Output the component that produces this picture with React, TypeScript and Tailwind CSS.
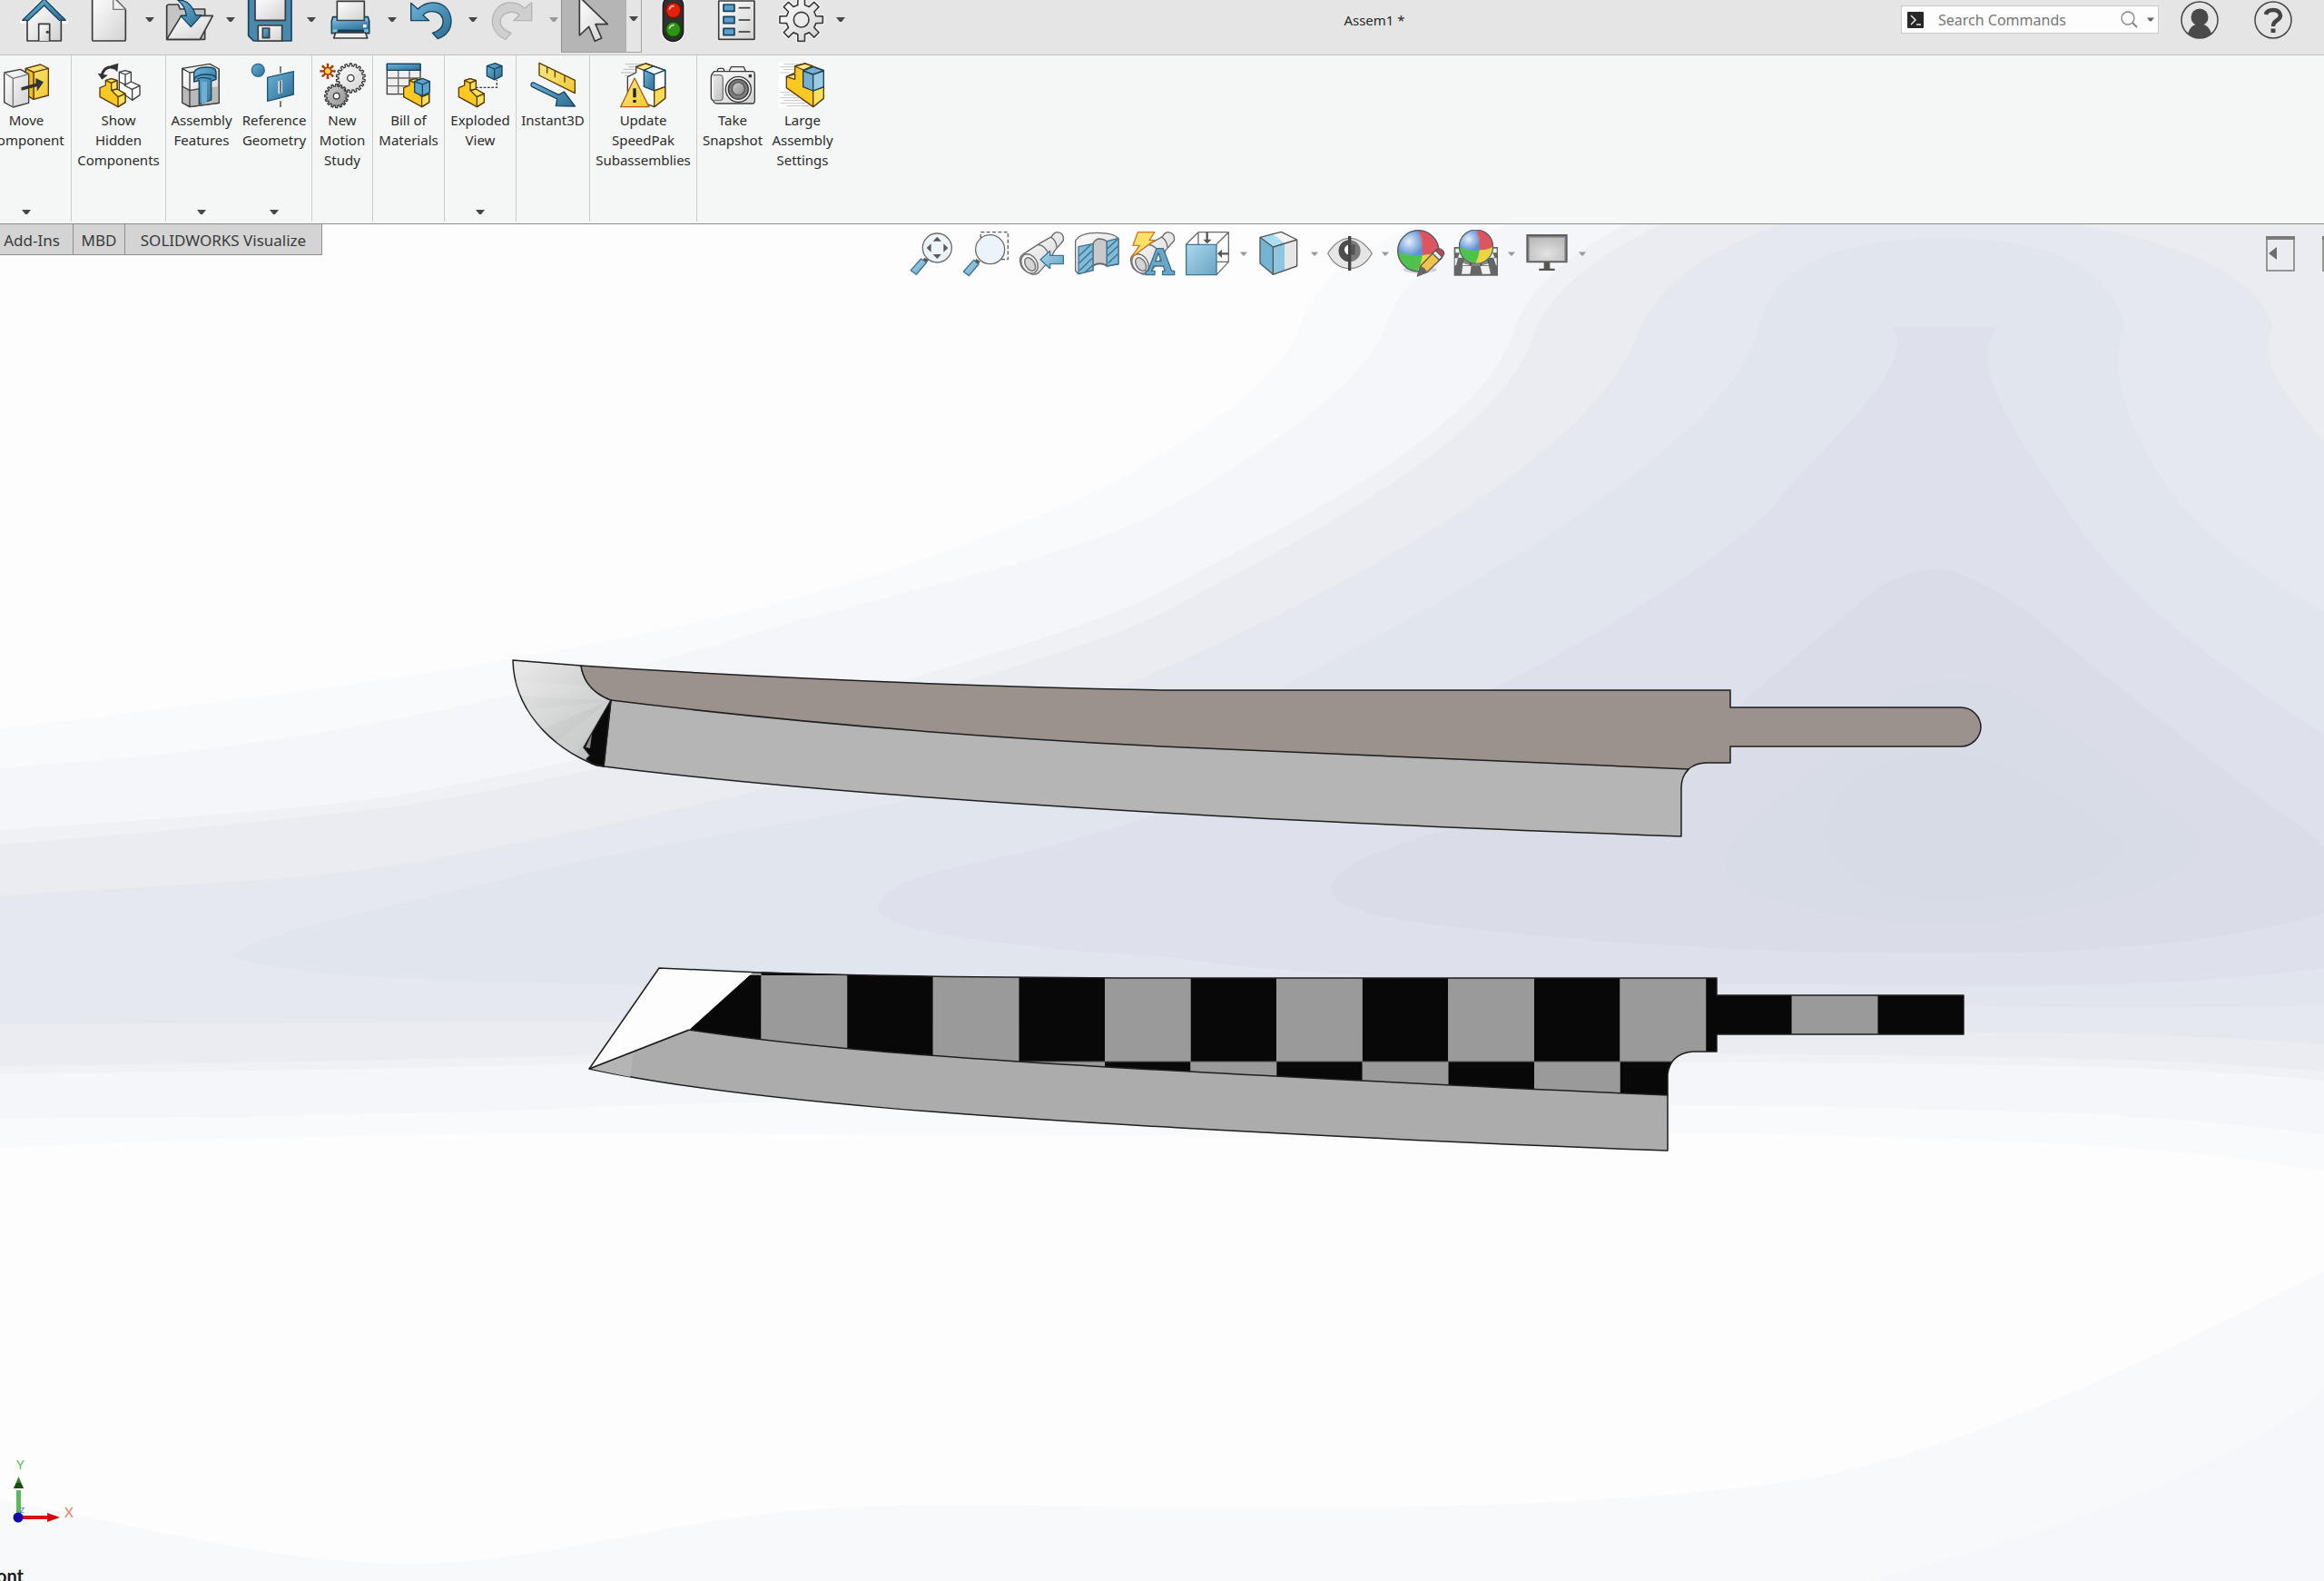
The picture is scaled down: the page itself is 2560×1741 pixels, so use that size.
import type { ReactNode } from "react";

const BLUE = "url(#blue)";
const SKY = "url(#sky)";
const GOLD = "url(#gold)";
const STEEL = "url(#steel)";
const INK = "#3b3b3b";
const NAVY = "#16425b";
const BROWN = "#5a3b0a";

function gearPath(cx: number, cy: number, outer: number, inner: number, teeth: number) {
  const step = (Math.PI * 2) / teeth;
  const pts: string[] = [];
  for (let i = 0; i < teeth; i++) {
    const a = i * step - Math.PI / 2;
    const corners: [number, number][] = [
      [inner, -0.3],
      [outer, -0.2],
      [outer, 0.2],
      [inner, 0.3],
    ];
    corners.forEach(([r, k]) => {
      const t = a + k * step;
      pts.push(`${(cx + r * Math.cos(t)).toFixed(1)} ${(cy + r * Math.sin(t)).toFixed(1)}`);
    });
  }
  return `M${pts.join("L")}Z`;
}

/* Shared gradients, referenced by every icon */
function Gradients() {
  return (
    <svg className="absolute h-0 w-0" aria-hidden="true">
      <defs>
        <linearGradient id="blue" x1="0" y1="0" x2="1" y2="1">
          <stop offset="0" stopColor="#6db3d9" />
          <stop offset="1" stopColor="#2c6c92" />
        </linearGradient>
        <linearGradient id="sky" x1="0" y1="0" x2="1" y2="1">
          <stop offset="0" stopColor="#a9daee" />
          <stop offset="1" stopColor="#6aa3c2" />
        </linearGradient>
        <linearGradient id="gold" x1="0" y1="0" x2="1" y2="1">
          <stop offset="0" stopColor="#fbe98a" />
          <stop offset="1" stopColor="#f0c92c" />
        </linearGradient>
        <linearGradient id="steel" x1="0" y1="0" x2="1" y2="1">
          <stop offset="0" stopColor="#ffffff" />
          <stop offset="1" stopColor="#d2d2d2" />
        </linearGradient>
        <linearGradient id="grey" x1="0" y1="0" x2="1" y2="1">
          <stop offset="0" stopColor="#d0d0d0" />
          <stop offset="1" stopColor="#8c8c8c" />
        </linearGradient>
        <radialGradient id="screen" cx="0.5" cy="0.7" r="0.7">
          <stop offset="0" stopColor="#e2e2e2" />
          <stop offset="1" stopColor="#bdbdbd" />
        </radialGradient>
        <radialGradient id="shine" cx="0.28" cy="0.28" r="0.35">
          <stop offset="0" stopColor="#ffffff" stopOpacity="0.85" />
          <stop offset="1" stopColor="#ffffff" stopOpacity="0" />
        </radialGradient>
      </defs>
    </svg>
  );
}

function Caret({ className = "fill-[#474747]" }: { className?: string }) {
  return (
    <svg width="10" height="5" viewBox="0 0 10 5" className={className} aria-hidden="true">
      <path d="M0 0H10L6 5H4Z" />
    </svg>
  );
}

function TopIcon({ box, children }: { box: string; children: ReactNode }) {
  return (
    <svg width="54" height="48" viewBox={box} fill="none" strokeWidth="5" strokeLinejoin="round" aria-hidden="true">
      {children}
    </svg>
  );
}

type TopItem = { label: string; icon: ReactNode; menu?: boolean; disabled?: boolean; active?: boolean };

const topItems: TopItem[] = [
  {
    label: "Home",
    icon: (
      <TopIcon box="66 0 162 144">
        <path d="M70 68 147-10 228 68V78H70Z" fill="#fff" />
        <path d="M93 66 149 12 205 66V135H93Z" fill={STEEL} stroke={INK} />
        <path d="M131 135V79H167V135" fill={STEEL} stroke={INK} />
        <circle cx="160" cy="106" r="5" fill={INK} />
        <path d="M77 67 149-4 220 67H199L149 18 97 67Z" fill={BLUE} stroke={NAVY} strokeWidth="4" />
      </TopIcon>
    ),
  },
  {
    label: "New",
    menu: true,
    icon: (
      <TopIcon box="282 0 162 144">
        <path d="M308-10H378L418 32V131Q418 135 414 135H312Q308 135 308 131Z" fill={STEEL} stroke={INK} />
        <path d="M377-10V31H418Z" fill="#f1f1f1" stroke="#777" strokeWidth="4" />
      </TopIcon>
    ),
  },
  {
    label: "Open",
    menu: true,
    icon: (
      <TopIcon box="549 0 162 144">
        <path d="M554 130V19Q556 15 562 15H592L598 30H680V130Z" fill="#c4c4c4" stroke={INK} />
        <path d="M554 130 602 52H706L664 130Z" fill={STEEL} stroke={INK} />
        <path d="M590 0Q632-2 650 50H669L634 89 600 52H619Q616 20 590 0Z" fill={BLUE} stroke={NAVY} strokeWidth="4" />
      </TopIcon>
    ),
  },
  {
    label: "Save",
    menu: true,
    icon: (
      <TopIcon box="816 0 162 144">
        <path d="M824-10H966V135H841L824 118Z" fill="#4889ad" stroke={NAVY} />
        <path d="M846-10H946V67H846Z" fill={STEEL} stroke={INK} />
        <path d="M856 135V84H935V135Z" fill={STEEL} stroke={INK} />
        <path d="M871 93H893V125H871Z" fill={BLUE} stroke={INK} />
      </TopIcon>
    ),
  },
  {
    label: "Print",
    menu: true,
    icon: (
      <TopIcon box="1083 0 162 144">
        <path d="M1103 56H1219L1223 70V110H1099V70Z" fill="#7dbfe0" stroke={NAVY} />
        <path d="M1117 4H1207V68H1117Z" fill={STEEL} stroke={INK} />
        <path d="M1101 70H1221V97H1101Z" fill={BLUE} />
        <path d="M1118 97H1206V108H1118Z" fill="#123f5b" />
        <path d="M1203 81H1214V91H1203Z" fill="#fff" />
        <path d="M1112 108H1211L1217 126H1106Z" fill="#efefef" stroke={INK} />
      </TopIcon>
    ),
  },
  {
    label: "Undo",
    menu: true,
    icon: (
      <TopIcon box="-60 0 162 144">
        <path
          d="M-49 10V68H11L-9 50C10 30 58 34 57 74Q56 98 22 109L40 128C72 116 84 92 84 68C80 4 12-8-26 30Z"
          fill={BLUE}
          stroke={NAVY}
          strokeWidth="4"
        />
      </TopIcon>
    ),
  },
  {
    label: "Redo",
    menu: true,
    disabled: true,
    icon: (
      <TopIcon box="207 0 162 144">
        <path
          d="M350 8V68H290L309 50C292 32 246 38 246 74Q248 96 282 109L264 130C232 118 220 92 220 68C224 6 294-8 326 28Z"
          fill="#cfcfcf"
          stroke="#b4b4b4"
          strokeWidth="4"
        />
      </TopIcon>
    ),
  },
  {
    label: "Select",
    menu: true,
    active: true,
    icon: (
      <TopIcon box="474 0 162 144">
        <path d="M505-10V117L536 88 556 136 578 126 558 80H598Z" fill={STEEL} stroke={INK} />
      </TopIcon>
    ),
  },
  {
    label: "Rebuild",
    icon: (
      <TopIcon box="738 0 162 144">
        <rect x="778" y="-20" width="79" height="162" rx="39" fill="#fff" />
        <rect x="784" y="-14" width="67" height="150" rx="33" fill="#303030" stroke="#222" />
        <circle cx="818" cy="34" r="25" fill="#e5200c" stroke="#7d1206" />
        <circle cx="818" cy="97" r="25" fill="#2f9315" stroke="#0f4a08" />
        <path d="M805 32Q808 19 821 20M805 95Q808 82 821 83" stroke="#fff" strokeOpacity="0.7" />
      </TopIcon>
    ),
  },
  {
    label: "File Properties",
    icon: (
      <TopIcon box="950 0 162 144">
        <path d="M966-2H1091V134H966Z" fill="#fff" />
        <path d="M970 3H1088V130H970Z" fill={STEEL} stroke={INK} />
        {[15, 55, 94].map((y) => (
          <g key={y}>
            <rect x="986" y={y} width="36" height="22" fill="#5aa0c8" stroke={NAVY} />
            <path d={`M1036 ${y + 11}H1074`} stroke={INK} />
          </g>
        ))}
      </TopIcon>
    ),
  },
  {
    label: "Options",
    menu: true,
    icon: (
      <TopIcon box="1161 0 162 144">
        <path d={gearPath(1244, 65, 72, 50, 8)} fill={STEEL} stroke="#fff" strokeWidth="12" />
        <path d={gearPath(1244, 65, 72, 50, 8)} fill={STEEL} stroke={INK} />
        <circle cx="1244" cy="65" r="25" fill="#ececec" stroke={INK} />
      </TopIcon>
    ),
  },
];

function TitleBar() {
  return (
    <header className="flex h-[61px] items-start border-b border-[#c3c3c3] bg-[#e5e5e5]">
      <nav aria-label="Quick access" className="flex h-[58px] shrink-0 items-start pl-3">
        {topItems.map((item) => (
          <div
            key={item.label}
            className={`flex h-full ${item.active ? "border-b border-[#a2a2a2]" : ""}`}
          >
            <button
              type="button"
              aria-label={item.label}
              disabled={item.disabled}
              className={`flex h-full items-start justify-center ${
                item.label === "Rebuild" || item.label === "File Properties" || item.label === "Options"
                  ? "w-[70px]"
                  : "w-[72px]"
              } ${item.active ? "border-l border-[#8e8e8e] bg-[#b5b5b5]" : ""}`}
            >
              {item.icon}
            </button>
            {item.menu && (
              <button
                type="button"
                aria-label={`${item.label} menu`}
                disabled={item.disabled}
                className={`flex w-[17px] items-center justify-center ${
                  item.active ? "h-full border-r border-[#a2a2a2] pb-4" : "h-[42px]"
                }`}
              >
                <Caret className={item.disabled ? "fill-[#9a9a9a]" : "fill-[#474747]"} />
              </button>
            )}
          </div>
        ))}
      </nav>

      <h1 className="flex h-[44px] flex-1 items-center justify-center text-[15px] text-[#2a2a2a]">Assem1 *</h1>

      {/* Search */}
      <div className="mt-1.5 flex h-[31px] w-[284px] items-center border border-[#c9c9c9] bg-[#fdfdfd] pr-0.5 pl-1.5">
        <svg width="18" height="18" viewBox="0 0 18 18" aria-hidden="true">
          <rect width="18" height="18" rx="1" fill="#272727" />
          <path d="M4 4 9 9 4 14M10 14H15" fill="none" stroke="#e8e8e8" strokeWidth="1.5" />
        </svg>
        <input
          type="text"
          aria-label="Search Commands"
          placeholder="Search Commands"
          className="ml-4 w-0 flex-1 bg-transparent text-base placeholder:text-[#777777] focus:outline-none"
        />
        <svg width="19" height="19" viewBox="0 0 19 19" fill="none" stroke="#858585" strokeWidth="1.3" aria-hidden="true">
          <circle cx="8" cy="8" r="7" />
          <path d="M13 13 18 18" strokeWidth="2" />
        </svg>
        <button type="button" aria-label="Search options" className="ml-2 p-0.5">
          <Caret className="w-2 fill-[#666666]" />
        </button>
      </div>

      <button type="button" aria-label="Account" className="ml-6 h-[44px]">
        <svg width="42" height="42" viewBox="0 0 42 42" aria-hidden="true">
          <circle cx="21" cy="21" r="20" fill="none" stroke="#444" strokeWidth="1.5" />
          <circle cx="21" cy="18" r="9.5" fill="#4a4a4a" />
          <path d="M8 36Q11 27 17 26H25Q31 27 34 36Q28 41 21 41T8 36Z" fill="#4a4a4a" />
        </svg>
      </button>
      <button type="button" aria-label="Help" className="mr-[35px] ml-[39px] h-[44px]">
        <svg width="42" height="42" viewBox="0 0 42 42" fill="none" stroke="#444" aria-hidden="true">
          <circle cx="21" cy="21" r="20" strokeWidth="1.5" />
          <path d="M13 15Q14 10 21 10T29 16Q29 19 25 21.500T21 28" strokeWidth="4.500" />
          <path d="M21 30.500V35" strokeWidth="5" />
        </svg>
      </button>
    </header>
  );
}

function RibbonIcon({ box, children }: { box: string; children: ReactNode }) {
  return (
    <svg
      width="50"
      height="50"
      viewBox={box}
      fill="none"
      strokeWidth="4"
      strokeLinejoin="round"
      className="shrink-0 overflow-visible"
      aria-hidden="true"
    >
      {children}
    </svg>
  );
}

/* L-shaped yellow part, drawn from its lower left corner */
function Part({ fill = "#fac823", top = "#fbe160", stroke = BROWN }: { fill?: string; top?: string; stroke?: string }) {
  return (
    <g stroke={stroke}>
      <path d="M0 30 19 22V6L38 0 57 6V36L84 50V78L60 93 0 60Z" fill={fill} />
      <path d="M19 6 38 0 57 6 38 14ZM38 38 57 34 84 50 60 60Z" fill={top} />
      <path d="M60 60 84 50V78L60 93ZM38 14 57 6V34L38 38Z" fill={top} />
    </g>
  );
}

type RibbonItem = { lines: string[]; width: string; icon: ReactNode; menu?: boolean };

const ribbonGroups: RibbonItem[][] = [
  [
    {
      lines: ["Move", "Component"],
      width: "w-[98px] -ml-5",
      menu: true,
      icon: (
        <RibbonIcon box="12 207 150 150">
          <path d="M85 226 134 213 160 226V315L111 328 85 312Z" fill={GOLD} stroke={BROWN} />
          <path d="M85 226 111 239 160 226M111 239V328" stroke={BROWN} />
          <path d="M85 226 111 239V328L85 312Z" fill="#f5bd1d" stroke={BROWN} />
          <path d="M14 240 68 229 95 245V340L43 354 14 338Z" fill={STEEL} stroke={INK} />
          <path d="M14 240 43 259 95 245M43 259V354" stroke="#777" />
          <path d="M70 289 118 275V258L144 271 122 302V286L71 299Z" fill="#333" />
        </RibbonIcon>
      ),
    },
  ],
  [
    {
      lines: ["Show", "Hidden", "Components"],
      width: "w-[103px]",
      icon: (
        <RibbonIcon box="316 207 150 150">
          <path d="M392 238 412 233 431 238V270L460 283V314L435 331 392 300Z" fill="#fff" stroke={INK} />
          <path d="M392 238 412 246 431 238M412 246V280L431 270M408 282 435 295 460 283M435 295V331M392 270 412 280" stroke={INK} />
          <path d="M334 248Q345 214 377 225" stroke="#333" strokeWidth="9" />
          <path d="M321 242 354 248 335 263ZM363 217 389 209 386 238Z" fill="#333" />
          <g transform="translate(328 260)">
            <Part />
          </g>
        </RibbonIcon>
      ),
    },
  ],
  [
    {
      lines: ["Assembly", "Features"],
      width: "w-[78px]",
      menu: true,
      icon: (
        <RibbonIcon box="591 207 150 150">
          <path d="M602 226 693 211 724 228V340L627 353 602 339Z" fill={STEEL} stroke={INK} />
          <path d="M602 285 627 299 724 285V340L627 353 602 339Z" fill="#b9b9b9" />
          <path d="M602 226 627 240 660 235M627 240V353M602 285 627 299 660 293M602 226V339L627 353 724 340V228" stroke={INK} />
          <path d="M641 240Q646 223 680 222T714 238V262L698 268V330L658 345V266L641 270Z" fill={BLUE} stroke={NAVY} />
          <path d="M641 262Q650 246 680 246T714 256M652 262Q668 250 698 262" stroke={NAVY} />
          <path d="M666 270H684V338L666 343Z" fill="#6fb0d2" />
        </RibbonIcon>
      ),
    },
    {
      lines: ["Reference", "Geometry"],
      width: "w-[82px]",
      menu: true,
      icon: (
        <RibbonIcon box="831 207 150 150">
          <circle cx="853" cy="232" r="21" fill={BLUE} stroke="#2b678b" />
          <path d="M884 256 970 236V312L884 334Z" fill={BLUE} stroke="#1f5674" />
          <path d="M919 268 933 265V306L919 310Z" fill="#d8e6ee" />
          <path d="M927 219V241M927 267V307M927 334V354" stroke={INK} />
        </RibbonIcon>
      ),
    },
  ],
  [
    {
      lines: ["New", "Motion", "Study"],
      width: "w-[66px]",
      icon: (
        <RibbonIcon box="1056 207 150 150">
          <path d={gearPath(1083, 235, 26, 14, 8)} fill="#a93c08" />
          <circle cx="1083" cy="235" r="9" fill="#fbd84c" />
          <path d={gearPath(1159, 258, 48, 40, 18)} fill={STEEL} stroke={INK} />
          <circle cx="1159" cy="258" r="11" fill="#fff" stroke={INK} />
          <path d={gearPath(1112, 317, 39, 32, 16)} fill="url(#grey)" stroke={INK} />
          <circle cx="1112" cy="317" r="10" fill="#fff" stroke={INK} />
        </RibbonIcon>
      ),
    },
  ],
  [
    {
      lines: ["Bill of", "Materials"],
      width: "w-[78px]",
      icon: (
        <RibbonIcon box="1275 207 150 150">
          <path d="M1279 211H1389V311H1279Z" fill="#efefef" stroke={INK} />
          <path d="M1279 258H1389M1279 284H1389M1316 234V311M1353 234V311" stroke="#666" />
          <path d="M1279 211H1389V232H1279Z" fill={BLUE} stroke={NAVY} />
          <g transform="translate(1334 260)">
            <Part />
          </g>
          <path d="M1370 269 1396 259 1420 269V305L1396 317 1370 305Z" fill="#5fa5cb" stroke={NAVY} />
          <path d="M1370 269 1396 279 1420 269M1396 279V317" stroke={NAVY} />
        </RibbonIcon>
      ),
    },
  ],
  [
    {
      lines: ["Exploded", "View"],
      width: "w-[78px]",
      menu: true,
      icon: (
        <RibbonIcon box="102 207 150 150">
          <path d="M194 218 224 203 254 218V254L224 270 194 254Z" fill="#fff" />
          <path d="M199 218 226 209 249 218V251L224 264 199 251Z" fill={BLUE} stroke={NAVY} />
          <path d="M199 218 224 228 249 218M224 228V264" stroke={NAVY} />
          <g transform="translate(106 260)">
            <Part />
          </g>
          <path d="M162 289H232V264" stroke={INK} strokeDasharray="8 5" />
        </RibbonIcon>
      ),
    },
  ],
  [
    {
      lines: ["Instant3D"],
      width: "w-[80px]",
      icon: (
        <RibbonIcon box="342 207 150 150">
          <path d="M372 208 490 265V308L372 249Z" fill={GOLD} stroke={BROWN} />
          <path d="M398 221V242M424 234V256M456 250V272" stroke={BROWN} />
          <path d="M345 278Q347 271 354 273L436 313 454 303 490 351 427 350 431 327 349 287Q344 284 345 278Z" fill={BLUE} stroke={NAVY} />
        </RibbonIcon>
      ),
    },
  ],
  [
    {
      lines: ["Update", "SpeedPak", "Subassemblies"],
      width: "w-[117px]",
      icon: (
        <RibbonIcon box="640 207 150 150">
          <path d="M655 212H720M665 221H700M648 229H690M640 240H685M652 250H680" stroke="#999" strokeWidth="2" />
          <path d="M662 254 690 240V220L722 210 786 232V325L750 353 662 320Z" fill="#fff" stroke={INK} />
          <path d="M690 222 722 210 748 219 716 232Z" fill="#fbe98a" stroke={BROWN} />
          <path d="M716 232 748 219 786 232 750 246Z" fill="#fff" stroke={NAVY} />
          <path d="M716 232 750 246V300L716 286Z" fill={BLUE} stroke={NAVY} />
          <path d="M750 246 786 232V287L750 300Z" fill="#fff" stroke={NAVY} />
          <path d="M750 300 786 287V325L750 353Z" fill="#f6dd55" stroke={BROWN} />
          <path d="M685 258 733 353H639Z" fill={GOLD} stroke="#b25a13" />
          <path d="M685 292V322M685 330V339" stroke="#222" strokeWidth="10" />
        </RibbonIcon>
      ),
    },
  ],
  [
    {
      lines: ["Take", "Snapshot"],
      width: "w-[78px]",
      icon: (
        <RibbonIcon box="936 207 150 150">
          <path d="M998 238 1006 221H1048L1055 238M961 238V230Q962 226 968 226H978Q984 227 984 238" fill="#f4f4f4" stroke={INK} />
          <path d="M950 236H1078Q1084 238 1084 244V336Q1083 342 1076 342H958Q950 342 947 332Q940 330 940 322V256Q940 244 950 236Z" fill={STEEL} stroke={INK} />
          <path d="M946 248H972Q979 250 979 262V320Q978 332 970 332H950" fill="url(#grey)" fillOpacity="0.4" stroke="#777" />
          <circle cx="1030" cy="295" r="42" fill="#ededed" stroke={INK} />
          <circle cx="1030" cy="295" r="33" fill="#7d7d7d" stroke={INK} />
          <circle cx="1030" cy="293" r="21" fill="url(#grey)" stroke="#555" />
          <path d="M1064 246H1074V256H1064Z" fill={INK} />
        </RibbonIcon>
      ),
    },
    {
      lines: ["Large", "Assembly", "Settings"],
      width: "w-[76px]",
      icon: (
        <RibbonIcon box="1167 207 150 150">
          <path d="M1164 206H1240V356H1164Z" fill="#fff" />
          <path d="M1180 212H1240M1168 221H1225M1180 229H1215M1168 240H1200M1168 305H1200M1180 314H1215M1168 323H1230M1180 332H1240M1168 341H1250M1190 350H1265" stroke="#a8a8a8" strokeWidth="2" />
          <path d="M1189 253 1217 240V219L1250 210 1312 232V325L1277 353 1189 290Z" fill="#fac823" stroke={BROWN} />
          <path d="M1217 219 1250 210 1275 218 1245 231ZM1189 253 1217 245V262Z" fill="#fbe98a" stroke={BROWN} />
          <path d="M1277 300 1312 287V325L1277 353Z" fill="#f9e25c" stroke={BROWN} />
          <path d="M1244 234 1277 221 1312 234V287L1277 300 1244 287Z" fill="#79aecf" stroke={NAVY} />
          <path d="M1244 234 1277 246 1312 234V287L1277 300V246" fill="#9ccbe2" stroke={NAVY} />
        </RibbonIcon>
      ),
    },
  ],
];

function Ribbon() {
  return (
    <section aria-label="Assembly commands" className="flex h-[186px] border-b border-[#8c8c8c] bg-[#f5f7f6] pb-0.5">
      {ribbonGroups.map((group, i) => (
        <div
          key={group[0].lines[0]}
          className={`flex ${i < ribbonGroups.length - 1 ? "border-r border-[#cccccc]" : ""}`}
        >
          {group.map((item) => (
            <button
              key={item.lines.join(" ")}
              type="button"
              className={`flex shrink-0 flex-col items-center pt-2 pb-2 text-[15px] leading-[22px] text-[#2b2b2b] ${item.width}`}
            >
              {item.icon}
              <span className="mt-0.5 flex flex-col whitespace-nowrap">
                {item.lines.map((line) => (
                  <span key={line}>{line}</span>
                ))}
              </span>
              {item.menu && (
                <span className="mt-auto">
                  <Caret />
                </span>
              )}
            </button>
          ))}
        </div>
      ))}
    </section>
  );
}

function ViewIcon({ box, children }: { box: string; children: ReactNode }) {
  return (
    <svg width="54" height="52" viewBox={box} fill="none" strokeWidth="4" strokeLinejoin="round" aria-hidden="true">
      {children}
    </svg>
  );
}

function Spyglass({ x }: { x: number }) {
  return (
    <g transform={`translate(${x} 0)`} stroke="#6a6a6a">
      <path d="M404 142Q398 148 403 168T440 201Q452 203 462 196L496 158 516 122 544 90Q548 64 524 62Q512 64 506 76L468 98 412 134Z" fill={STEEL} />
      <path d="M460 104Q486 104 498 142M504 80Q520 88 522 112" />
      <ellipse cx="432" cy="166" rx="25" ry="34" transform="rotate(-32 432 166)" fill="#f4f4f4" />
      <ellipse cx="434" cy="168" rx="15" ry="24" transform="rotate(-32 434 168)" fill="#d5d5d5" />
    </g>
  );
}

function Ball({ cx, cy, r }: { cx: number; cy: number; r: number }) {
  return (
    <g transform={`translate(${cx} ${cy}) scale(${r / 100})`}>
      <circle r="100" fill="#4ec24a" />
      <path d="M0-100C-60-100-100-50-100 5Q-40 25 20 20Q20-50 0-100Z" fill="#5b90d6" />
      <path d="M0-100C60-100 100-50 100 5Q60 20 20 20Q20-50 0-100Z" fill="#dd5560" />
      <path d="M20 20Q60 20 100 0C100 60 50 100-5 100Q15 60 20 20Z" fill="#ecd447" />
      <circle r="100" fill="url(#shine)" />
      <circle r="98" stroke="#5a5f66" strokeWidth="6" />
    </g>
  );
}

const viewItems: { label: string; icon: ReactNode; menu?: boolean }[] = [
  {
    label: "Zoom to Fit",
    icon: (
      <ViewIcon box="27 54 162 156">
        <path d="M84 146 100 154 92 162 80 156Z" fill="#555" />
        <path d="M74 150 92 162 58 202 40 188Z" fill={SKY} stroke="#3d6f8a" />
        <circle cx="127" cy="114" r="48" fill="#eef5fa" stroke="#6a6a6a" />
        <path d="M127 77 141 92H113ZM127 150 141 135H113ZM92 114 107 100V128ZM163 114 148 100V128Z" fill="#5a5a5a" />
      </ViewIcon>
    ),
  },
  {
    label: "Zoom to Area",
    icon: (
      <ViewIcon box="210 54 162 156">
        <path d="M271 100V62H361V152H330" stroke="#5f5f5f" strokeDasharray="12 7" />
        <path d="M256 150 270 160 262 168 250 160Z" fill="#555" />
        <path d="M248 154 264 168 232 206 214 192Z" fill={SKY} stroke="#3d6f8a" />
        <circle cx="302" cy="119" r="48" fill="#eaf2fa" fillOpacity="0.92" stroke="#6a6a6a" />
      </ViewIcon>
    ),
  },
  {
    label: "Previous View",
    icon: (
      <ViewIcon box="393 54 162 156">
        <Spyglass x={0} />
        <path d="M468 153 500 124V139H544V167H500V182Z" fill={SKY} stroke="#3d7595" />
      </ViewIcon>
    ),
  },
  {
    label: "Section View",
    icon: (
      <ViewIcon box="576 54 162 156">
        <path d="M584 90Q600 64 656 64T726 84V168L688 174Q664 160 642 174V188L594 200 584 190Z" fill={STEEL} stroke="#6a6a6a" />
        <path d="M642 100Q650 84 664 84T688 92V172Q664 158 642 172Z" fill="#c9c9c9" stroke="#6a6a6a" />
        <path d="M594 110 642 100V188L594 200ZM688 92 726 82V166L688 174Z" fill="#80bcd9" stroke="#3d7595" />
        <path d="M596 140 634 104M596 164 640 122M598 188 640 148M616 194 640 172M690 116 722 86M690 140 724 108M692 164 724 134" stroke="#3f6d86" />
      </ViewIcon>
    ),
  },
  {
    label: "Dynamic Annotation Views",
    icon: (
      <ViewIcon box="759 54 162 156">
        <Spyglass x={366} />
        <path d="M790 62H846L828 88H846L768 146 796 106H774Z" fill="#fbe06a" stroke="#c9792c" />
        <path
          d="M852 116H874L902 190H911V203H872V190H880L874 174H842L836 190H846V203H816V190H824ZM848 158H868L858 130Z"
          fill="#6aa6c8"
          fillRule="evenodd"
          stroke="#3d6f8a"
        />
      </ViewIcon>
    ),
  },
  {
    label: "View Orientation",
    menu: true,
    icon: (
      <ViewIcon box="942 54 162 156">
        <path d="M950 102 990 62H1090V160L1050 203M990 62V102M1050 102 1090 62M1050 160H1090" stroke="#6a6a6a" />
        <path d="M950 103H1050V203H950Z" fill={SKY} stroke="#3d7595" />
        <path d="M1019 62V90M1090 133H1064" stroke="#555" strokeWidth="7" />
        <path d="M1006 86H1034L1019 100ZM1068 119V147L1053 133Z" fill="#555" />
      </ViewIcon>
    ),
  },
  {
    label: "Display Style",
    menu: true,
    icon: (
      <ViewIcon box="6 54 162 156">
        <path d="M24 79 94 61 146 87 67 111Z" fill="#f5f5f5" />
        <path d="M24 79 66 68 106 99 67 111Z" fill="#a9def3" />
        <path d="M24 79 67 111V202L24 165Z" fill="#74b4d3" />
        <path d="M67 111 106 99V189L67 202Z" fill="#8cc6e0" />
        <path d="M106 99 146 87V174L106 189Z" fill="#e6e6e6" />
        <path d="M24 79 94 61 146 87V174L67 202 24 165ZM24 79 67 111 146 87M67 111V202" stroke="#555" />
      </ViewIcon>
    ),
  },
  {
    label: "Hide/Show Items",
    menu: true,
    icon: (
      <ViewIcon box="240 54 162 156">
        <path d="M248 132Q280 82 320 82T394 132Q366 182 320 182T248 132Z" fill="#e6e6e6" stroke="#8a8a8a" />
        <circle cx="320" cy="124" r="36" fill="#7a7a7a" />
        <path d="M320 88A36 36 0 0 0 320 160Z" fill="#4d4d4d" />
        <circle cx="320" cy="120" r="17" fill="#fff" />
        <path d="M320 103H338V137H320Z" fill="#555" />
        <path d="M320 75V189" stroke="#444" strokeWidth="10" />
      </ViewIcon>
    ),
  },
  {
    label: "Edit Appearance",
    icon: (
      <ViewIcon box="474 54 162 156">
        <ellipse cx="552" cy="186" rx="56" ry="12" fill="#bdbdc2" fillOpacity="0.6" />
        <Ball cx={547} cy={124} r={69} />
        <path d="M544 207 554 174 600 126 624 148 576 194Z" fill="#f0c44c" stroke="#5a5a5a" />
        <path d="M544 207 554 174Q568 178 576 194Z" fill="#666" />
        <path d="M604 122 610 118Q619 114 627 122T630 138L626 144Z" fill="#c94650" stroke="#5a5a5a" />
        <path d="M594 132 604 122 626 144 616 154Z" fill="#eee" stroke="#5a5a5a" />
      </ViewIcon>
    ),
  },
  {
    label: "Apply Scene",
    menu: true,
    icon: (
      <ViewIcon box="657 54 162 156">
        <path d="M665 111H810V206H665Z" fill="#646765" />
        <path d="M670 116H684V130H670ZM792 116H806V130H792ZM684 130H698L700 146H678ZM780 130H792L800 146H776ZM668 148H678L672 172H668ZM796 148H806V172H804ZM700 150H720L716 172H692ZM752 150H772L780 172H758ZM694 174H722L718 200H690ZM752 174H780L786 200H758ZM724 160H750L752 172H722Z" fill="#f0f0f0" />
        <ellipse cx="738" cy="160" rx="44" ry="12" fill="#444" fillOpacity="0.6" />
        <Ball cx={738} cy={110} r={57} />
      </ViewIcon>
    ),
  },
  {
    label: "View Settings",
    menu: true,
    icon: (
      <ViewIcon box="891 54 162 156">
        <path d="M962 162H982V182H998V189H946V182H962Z" fill="#555" />
        <path d="M904 69H1040V163H904Z" fill="#5f5f5f" />
        <path d="M910 76H1034V158H910Z" fill="#8b8b8b" />
        <path d="M914 80H1030V156H914Z" fill="url(#screen)" />
      </ViewIcon>
    ),
  },
];

const tabs = [
  { label: "Add-Ins", className: "w-[81px] pr-2.5" },
  { label: "MBD", className: "w-[57px]" },
  { label: "SOLIDWORKS Visualize", className: "w-[217px]" },
];

/* Background shading, from the lightest band to the darkest */
const bands = [
  {
    fill: "#f8fafb",
    d: "M0 802C200 778 380 758 565 725S900 660 1061 600S1230 530 1280 500S1410 420 1431 361S1500 275 1560 247H2560V1290Q2400 1262 2200 1257Q1900 1244 1700 1248T1280 1251T735 1248T0 1264Z",
  },
  {
    fill: "#f8f9fb",
    d: "M0 1652C120 1672 300 1722 449 1722S740 1672 898 1662S1160 1660 1280 1660C1500 1662 1760 1660 1960 1633S2400 1480 2560 1400V1741H0Z",
  },
  { fill: "#f5f7fa", d: "M2060 1741Q2440 1640 2560 1530V1741Z" },
  {
    fill: "#f4f6fa",
    d: "M0 846C110 838 220 828 327 811S650 752 816 702S1190 612 1280 562S1500 430 1525 361S1600 280 1660 247H2560V1250Q2400 1228 2200 1223T1845 1217C1600 1210 900 1208 653 1219S200 1230 0 1232Z",
  },
  {
    fill: "#eff1f5",
    d: "M0 914C140 904 280 896 408 880S1120 735 1280 651S1640 470 1668 361Q1690 300 1790 247H2560V1190Q2400 1174 2200 1173C1900 1168 900 1164 653 1171S200 1180 0 1182Z",
  },
  {
    fill: "#ebecf1",
    d: "M0 930C150 918 300 904 420 890S1130 755 1290 670S1660 480 1692 361Q1720 300 1830 247H2560V1180Q2400 1166 2200 1164C1900 1158 900 1156 653 1162S200 1172 0 1174Z",
  },
  {
    fill: "#e5e8ef",
    d: "M0 987C140 975 280 974 408 957S1070 830 1280 737S1760 500 1807 361Q1840 290 1960 247H2284Q2480 280 2504 361Q2480 400 2560 485V1150Q2400 1138 2200 1137C1900 1132 900 1124 653 1125S200 1127 0 1128Z",
  },
  {
    fill: "#e1e5ed",
    d: "M257 1053C262 1034 420 1000 571 964S870 908 1020 877S1300 815 1411 757S1910 500 1937 361Q1960 262 2140 262T2341 361C2310 420 2380 540 2423 578S2500 640 2560 674V1107Q2380 1112 2200 1108C1900 1104 900 1094 686 1084Q310 1080 257 1053Z",
  },
  {
    fill: "#dee0eb",
    d: "M967 1002C970 965 1060 955 1143 935S1500 830 1647 757S1930 590 1958 552S2120 400 2084 360H2202C2160 400 2230 490 2284 572S2450 740 2560 808V1066Q2420 1084 2260 1085T1770 1082T1280 1053Q980 1035 967 1002Z",
  },
  {
    fill: "#dadce7",
    d: "M1466 980C1470 945 1560 925 1607 910S1850 835 1917 776S2030 680 2055 658S2110 627 2133 627S2200 645 2260 696S2360 775 2423 827S2540 910 2560 932V1005Q2420 1050 2137 1050T1607 1021Q1466 1006 1466 980Z",
  },
  { fill: "#d8dce6", d: "M1900 955C1905 900 2010 860 2080 770Q2140 730 2220 765C2280 800 2400 900 2424 925C2440 980 2220 1018 2140 1018S1900 990 1900 955Z" },
  { fill: "#d7dbe5", d: "M2010 920Q2020 850 2110 830T2340 930Q2330 980 2180 990T2010 920Z" },
];

const CHECK = 94.6;
const CHECK_START = 744;
const checks = Array.from({ length: 15 }, (_, i) => i);

function Model() {
  return (
    <svg
      viewBox="0 247 2560 1494"
      preserveAspectRatio="xMidYMid slice"
      className="absolute inset-0 h-full w-full"
      role="img"
      aria-label="Two blade components"
    >
      <defs>
        <clipPath id="checkered">
          <path d="M759 1134 830 1070Q1027 1077 1330 1077H1891V1096H2163V1139H1891V1158H1865Q1840 1160 1837 1183V1215L1122 1180 838 1155Z" />
        </clipPath>
        <linearGradient id="tip" x1="0.1" y1="0.1" x2="0.8" y2="1">
          <stop offset="0" stopColor="#e6e6e6" />
          <stop offset="0.5" stopColor="#cfd0d0" />
          <stop offset="1" stopColor="#bcc0c0" />
        </linearGradient>
      </defs>

      {bands.map((band) => (
        <path key={band.d} d={band.d} fill={band.fill} />
      ))}

      {/* Curved blade */}
      <g stroke="#1e1e1e" strokeWidth="1.5" strokeLinejoin="round">
        <path d="M565 727 640 733Q644 760 673 771L665 844 657 843C605 822 566 780 565 727Z" fill="url(#tip)" />
        <path d="M567 750 645 755 671 772 572 766ZM578 782 671 772 596 803ZM612 818 671 772 634 832Z" fill="#ffffff" fillOpacity="0.12" stroke="none" />
        <path d="M640 733Q940 753 1280 760H1906V779H2160A22 22 0 0 1 2182 801A22 22 0 0 1 2160 822H1906V840H1880Q1868 840 1860 847L1856 852 1280 850 700 790 673 771Q644 760 640 733Z" fill="#9b928e" />
        <path d="M673 771C860 794 1080 812 1280 822S1680 840 1860 847Q1852 855 1852 868V921C1660 914 1480 907 1280 895S860 868 665 844Z" fill="#b5b5b5" />
        <path d="M673 771 665 844 652 841 646 836 650 832 643 823Z" fill="#0a0a0a" />
        <path d="M652 808 650 824 645 823Z" fill="#8a8a8a" stroke="none" />
      </g>

      {/* Straight blade */}
      <g strokeLinejoin="round">
        <g clipPath="url(#checkered)">
          {checks.map((i) => {
            const dark = i % 2 === 0 ? "#080808" : "#9a9a9a";
            const light = i % 2 === 0 ? "#9a9a9a" : "#080808";
            const x = CHECK_START + i * CHECK;
            return (
              <g key={i}>
                <rect x={x} y="1060" width={CHECK} height="14" fill={light} />
                <rect x={x} y="1074" width={CHECK} height="95" fill={dark} />
                <rect x={x} y="1169" width={CHECK} height="60" fill={light} />
              </g>
            );
          })}
          <path d="M830 1169H1900" stroke="#555" />
        </g>
        <path
          d="M649 1177 759 1134C880 1152 1000 1161 1122 1169S1600 1196 1837 1206V1267C1660 1261 1480 1252 1300 1242S820 1214 649 1177Z"
          fill="#acacac"
          stroke="#1e1e1e"
          strokeWidth="1.5"
        />
        <path d="M651 1177 698 1159 694 1186Z" fill="#b5b5b5" />
        <path d="M649 1177 726 1066 830 1070 759 1134Z" fill="#fdfdfd" />
        <g fill="none" stroke="#1e1e1e" strokeWidth="1.5">
          <path d="M649 1177 726 1066 838 1071Q1027 1077 1330 1077H1891V1096H2163V1139H1891V1158H1865Q1840 1160 1837 1183V1206" />
          <path d="M649 1177 759 1134" />
        </g>
      </g>
    </svg>
  );
}

function Triad() {
  return (
    <svg
      width="100"
      height="100"
      viewBox="0 -10 100 100"
      className="absolute bottom-10 left-0 font-['Lato',sans-serif]"
      aria-hidden="true"
    >
      <path d="M18 60V30H23V60Z" fill="#5cb85a" />
      <path d="M20.500 15 26 28H15Z" fill="#2f7f2b" />
      <path d="M15 28 18 22H23L26 28Z" fill="#1d4d0c" />
      <path d="M22 58H53V62H22Z" fill="#d81010" />
      <path d="M52 55 66 60 52 65Z" fill="#d00808" />
      <circle cx="20" cy="60" r="5.500" fill="#0808a8" />
      <text x="18" y="7" fontSize="14" fill="#5cb85a">Y</text>
      <text x="71" y="60" fontSize="15" fill="#e8805f">X</text>
      <text x="22" y="55" fontSize="8" fill="#4060d8">Z</text>
    </svg>
  );
}

function PaneToggle() {
  return (
    <svg width="32" height="39" viewBox="0 0 32 39" className="shrink-0" aria-hidden="true">
      <path d="M1 1H31V38H1Z" fill="none" stroke="#7b7b7b" strokeWidth="1.500" />
      <path d="M0 0H32V4H0Z" fill="#7b7b7b" />
      <path d="M12 12V26L3 19Z" fill="#6e6e6e" />
    </svg>
  );
}

function Viewport() {
  return (
    <main className="relative flex-1 overflow-hidden bg-[#fdfdfd]">
      <Model />
      <div className="relative flex items-start">
        <div role="tablist" className="flex shrink-0">
          {tabs.map((tab) => (
            <button
              key={tab.label}
              type="button"
              role="tab"
              className={`h-[34px] border-r border-b border-[#8f8f8f] bg-[#d4d4d4] pt-0.5 text-[17px] whitespace-nowrap text-[#3a3a3a] ${tab.className}`}
            >
              {tab.label}
            </button>
          ))}
        </div>

        <div role="toolbar" aria-label="View" className="flex flex-1 justify-center pt-1.5 pr-[104px]">
          {viewItems.map((item) => (
            <div key={item.label} className="flex items-center">
              <button type="button" aria-label={item.label} className="flex w-[61px] justify-center">
                {item.icon}
              </button>
              {item.menu && (
                <button type="button" aria-label={`${item.label} menu`} className="flex w-[17px] justify-center">
                  <Caret className="w-2 fill-[#9a9a9a]" />
                </button>
              )}
            </div>
          ))}
        </div>

        <div className="flex w-16 shrink-0 gap-[30px] overflow-hidden pt-[13px]">
          <button type="button" aria-label="Collapse pane" className="shrink-0">
            <PaneToggle />
          </button>
          <button type="button" aria-label="Expand pane" className="shrink-0">
            <PaneToggle />
          </button>
        </div>
      </div>

      <Triad />
      <div className="absolute -bottom-2 left-0 flex w-[26px] justify-end overflow-hidden font-['Lato',sans-serif] text-xl leading-7 font-bold text-[#1a1a1a]">
        <span>*Front</span>
      </div>
    </main>
  );
}

export default function App() {
  return (
    <div className="flex min-h-screen flex-col overflow-hidden font-['Noto_Sans','Open_Sans',sans-serif]">
      <Gradients />
      <TitleBar />
      <Ribbon />
      <Viewport />
    </div>
  );
}
